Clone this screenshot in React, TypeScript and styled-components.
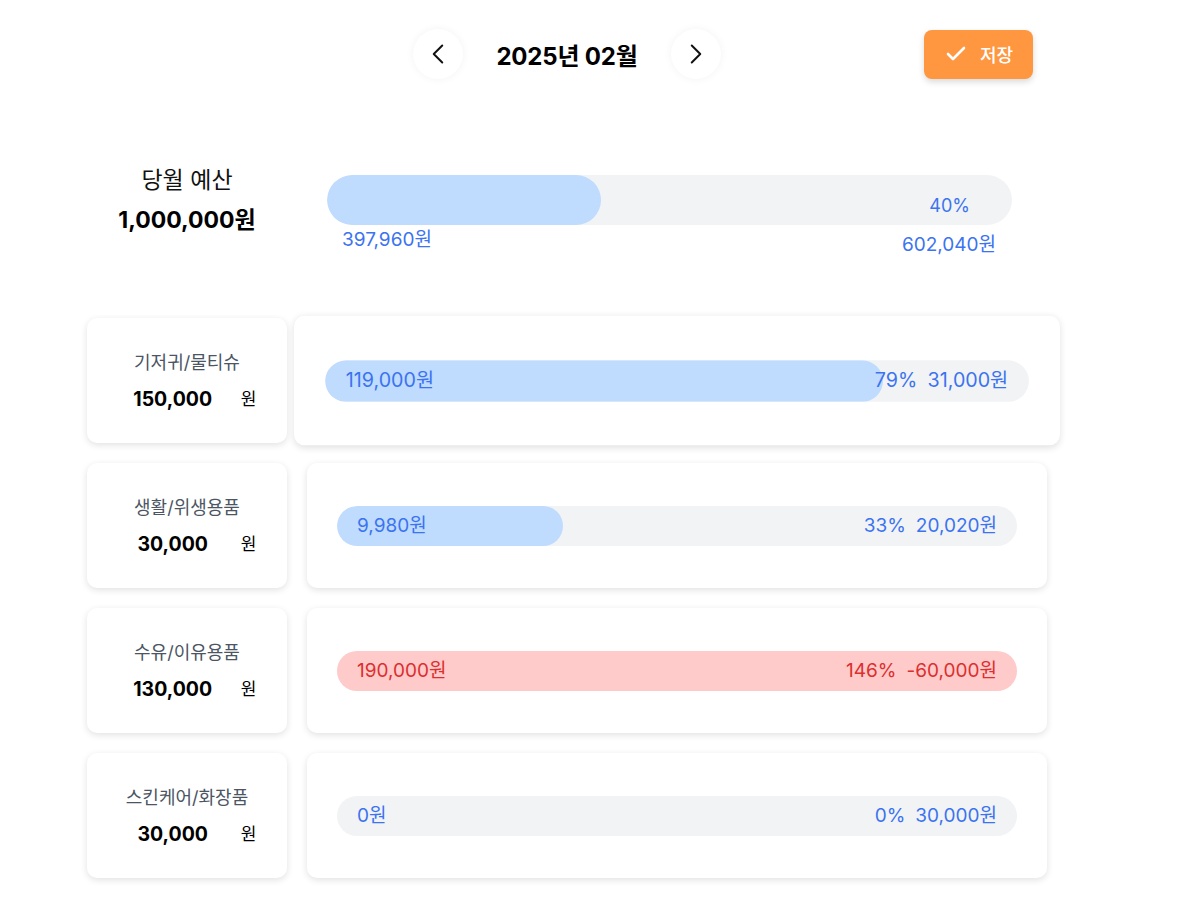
import React from 'react';
import styled, { createGlobalStyle } from 'styled-components';
import { ChevronLeft, ChevronRight, Check } from 'lucide-react';

const GlobalStyle = createGlobalStyle`
  body {
    margin: 0;
    background: #ffffff;
    font-family: Inter, "Noto Sans CJK KR", "Noto Sans", sans-serif;
    color: #111;
  }
`;

type Category = {
  name: string;
  budget: number;
  spent: number;
};

const categories: Category[] = [
  { name: '기저귀/물티슈', budget: 150000, spent: 119000 },
  { name: '생활/위생용품', budget: 30000, spent: 9980 },
  { name: '수유/이유용품', budget: 130000, spent: 190000 },
  { name: '스킨케어/화장품', budget: 30000, spent: 0 },
];

const won = (n: number) => n.toLocaleString('en-US');

const Page = styled.div`
  width: 960px;
  padding: 29px 0 20px 87px;
`;

const Header = styled.header`
  display: grid;
  grid-template-columns: 1fr auto 1fr;
  align-items: center;
  height: 50px;
`;

const MonthNav = styled.div`
  grid-column: 2;
  display: flex;
  align-items: center;
  gap: 33px;
`;

const CircleButton = styled.button`
  width: 50px;
  height: 50px;
  border-radius: 50%;
  border: none;
  background: #fff;
  box-shadow: 0 0 8px rgba(0, 0, 0, 0.05);
  display: flex;
  align-items: center;
  justify-content: center;
  color: #111;
  padding: 0;
  cursor: pointer;
`;

const MonthTitle = styled.h1`
  margin: 0;
  font-size: 24px;
  font-weight: 700;
  letter-spacing: -0.2px;
  color: #000;
`;

const SaveButton = styled.button`
  grid-column: 3;
  justify-self: end;
  margin-right: 14px;
  height: 49px;
  padding: 0 20px;
  display: flex;
  align-items: center;
  gap: 12px;
  border: none;
  border-radius: 8px;
  background: #ff9640;
  color: #fff;
  font-family: inherit;
  font-size: 18px;
  font-weight: 500;
  box-shadow: 0 3px 6px rgba(0, 0, 0, 0.15);
  cursor: pointer;
`;

const Summary = styled.section`
  display: flex;
  align-items: flex-start;
  gap: 40px;
  margin-top: 87px;
`;

const SummaryLabel = styled.div`
  width: 200px;
  text-align: center;
`;

const SummaryTitle = styled.div`
  font-size: 23px;
  line-height: 28px;
  color: #111;
`;

const SummaryAmount = styled.div`
  margin-top: 12px;
  font-size: 23px;
  line-height: 28px;
  font-weight: 700;
  color: #000;
`;

const SummaryBody = styled.div`
  flex: 1;
  margin-right: 35px;
  padding-top: 9px;
`;

const BigTrack = styled.div`
  position: relative;
  height: 50px;
  border-radius: 25px;
  background: #f2f3f5;
  overflow: hidden;
  display: flex;
  align-items: flex-end;
  justify-content: flex-end;
  padding: 0 42px 8px 0;
  box-sizing: border-box;
`;

const BigFill = styled.div`
  position: absolute;
  left: 0;
  top: 0;
  bottom: 0;
  border-radius: 25px;
  background: #bfdbfe;
`;

const BigPercent = styled.span`
  position: relative;
  font-size: 18px;
  line-height: 22px;
  color: #3b73f0;
`;

const SummaryFoot = styled.div`
  display: flex;
  justify-content: space-between;
  align-items: flex-start;
  padding: 0 16px 0 15px;
  margin-top: 4px;
  font-size: 19px;
  line-height: 22px;
  color: #3b73f0;
`;

const Remaining = styled.span`
  margin-top: 5px;
`;

const RowList = styled.div`
  display: flex;
  flex-direction: column;
  gap: 20px;
  margin-top: 62px;
`;

const Row = styled.div`
  display: grid;
  grid-template-columns: 200px 1fr;
  gap: 20px;
  height: 125px;
`;

const Card = styled.div<{ $active?: boolean }>`
  background: #fff;
  border-radius: 10px;
  box-shadow: 0 2px 7px rgba(0, 0, 0, 0.12);
  transform: ${(p) => (p.$active ? 'scale(1.035)' : 'none')};
`;

const BudgetCard = styled(Card)`
  display: flex;
  flex-direction: column;
  align-items: center;
  justify-content: center;
  gap: 12px;
`;

const CategoryName = styled.div`
  font-size: 18px;
  line-height: 24px;
  color: #4b5563;
`;

const AmountLine = styled.div`
  display: flex;
  align-items: center;
  gap: 13px;
  line-height: 24px;
`;

const AmountValue = styled.span`
  width: 110px;
  text-align: center;
  font-size: 19.5px;
  font-weight: 700;
  color: #000;
`;

const Unit = styled.span`
  font-size: 17px;
  color: #000;
`;

const ProgressCard = styled(Card)`
  display: flex;
  align-items: center;
  padding: 0 30px;
`;

const Track = styled.div<{ $over?: boolean }>`
  position: relative;
  flex: 1;
  height: 40px;
  border-radius: 20px;
  overflow: hidden;
  background: ${(p) => (p.$over ? '#fecaca' : '#f2f3f5')};
`;

const Fill = styled.div`
  position: absolute;
  left: 0;
  top: 0;
  bottom: 0;
  border-radius: 20px;
  background: #bfdbfe;
`;

const TrackText = styled.div<{ $over?: boolean }>`
  position: relative;
  height: 100%;
  display: flex;
  align-items: center;
  justify-content: space-between;
  padding: 0 20px;
  font-size: 19px;
  line-height: 24px;
  color: ${(p) => (p.$over ? '#dc2f2f' : '#3b73f0')};
`;

const RightInfo = styled.span`
  display: flex;
  align-items: baseline;
  gap: 10px;
`;

export default function App() {
  const total = 1000000;
  const spentTotal = 397960;
  const pct = Math.round((spentTotal / total) * 100);

  return (
    <Page>
      <GlobalStyle />
      <Header>
        <MonthNav>
          <CircleButton aria-label="이전 달">
            <ChevronLeft size={34} strokeWidth={1.4} />
          </CircleButton>
          <MonthTitle>2025년 02월</MonthTitle>
          <CircleButton aria-label="다음 달">
            <ChevronRight size={34} strokeWidth={1.4} />
          </CircleButton>
        </MonthNav>
        <SaveButton>
          <Check size={24} strokeWidth={2.6} />
          저장
        </SaveButton>
      </Header>

      <Summary>
        <SummaryLabel>
          <SummaryTitle>당월 예산</SummaryTitle>
          <SummaryAmount>{won(total)}원</SummaryAmount>
        </SummaryLabel>
        <SummaryBody>
          <BigTrack>
            <BigFill style={{ width: `${pct}%` }} />
            <BigPercent>{pct}%</BigPercent>
          </BigTrack>
          <SummaryFoot>
            <span>{won(spentTotal)}원</span>
            <Remaining>{won(total - spentTotal)}원</Remaining>
          </SummaryFoot>
        </SummaryBody>
      </Summary>

      <RowList>
        {categories.map((c, i) => {
          const ratio = c.budget ? c.spent / c.budget : 0;
          const over = ratio > 1;
          return (
            <Row key={c.name}>
              <BudgetCard>
                <CategoryName>{c.name}</CategoryName>
                <AmountLine>
                  <AmountValue>{won(c.budget)}</AmountValue>
                  <Unit>원</Unit>
                </AmountLine>
              </BudgetCard>
              <ProgressCard $active={i === 0}>
                <Track $over={over}>
                  {!over && <Fill style={{ width: `${ratio * 100}%` }} />}
                  <TrackText $over={over}>
                    <span>{won(c.spent)}원</span>
                    <RightInfo>
                      <span>{Math.round(ratio * 100)}%</span>
                      <span>{won(c.budget - c.spent)}원</span>
                    </RightInfo>
                  </TrackText>
                </Track>
              </ProgressCard>
            </Row>
          );
        })}
      </RowList>
    </Page>
  );
}
